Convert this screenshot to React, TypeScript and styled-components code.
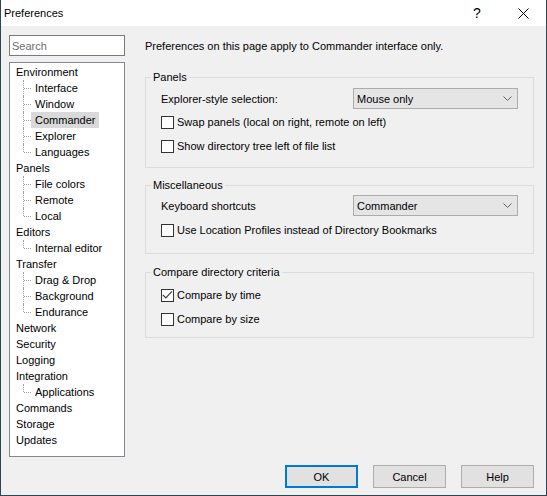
import React from 'react'
import styled, { createGlobalStyle } from 'styled-components'

const GlobalStyle = createGlobalStyle`
  html, body {
    margin: 0;
    padding: 0;
    background: #fff;
  }
  body {
    font-family: 'Liberation Sans', Arial, sans-serif;
    font-size: 11px;
    color: #000;
  }
  * {
    box-sizing: border-box;
  }
`

const Window = styled.div`
  width: 547px;
  height: 496px;
  display: flex;
  flex-direction: column;
  border: 1px solid #2b4553;
  border-top: none;
  background: #f0f0f0;
`

const TitleBar = styled.div`
  height: 26px;
  flex: none;
  display: flex;
  align-items: center;
  background: #fff;
`

const Title = styled.div`
  flex: 1;
  padding-left: 3px;
  line-height: 16px;
`

const CaptionButton = styled.div`
  width: 46px;
  height: 100%;
  display: flex;
  align-items: center;
  justify-content: center;
  font-size: 14px;
`

const Body = styled.div`
  flex: 1;
  display: flex;
  flex-direction: column;
  padding: 9px 12px 7px 8px;
  min-height: 0;
`

const Main = styled.div`
  flex: 1;
  display: flex;
  min-height: 0;
`

const Sidebar = styled.div`
  width: 116px;
  flex: none;
  display: flex;
  flex-direction: column;
  gap: 6px;
`

const Search = styled.input`
  height: 21px;
  border: 1px solid #7a7a7a;
  background: #fff;
  padding: 0 2px;
  font: inherit;
  outline: none;

  &::placeholder {
    color: #6d6d6d;
  }
`

const Tree = styled.div`
  flex: 1;
  border: 1px solid #828790;
  background: #fff;
  padding-top: 1px;
`

const Row = styled.div<{ $child?: boolean }>`
  height: 16px;
  display: flex;
  align-items: stretch;
  padding-left: ${p => (p.$child ? 13 : 2)}px;
`

const Connector = styled.span<{ $last?: boolean }>`
  position: relative;
  width: 8px;
  flex: none;

  &::before {
    content: '';
    position: absolute;
    left: 0;
    top: 0;
    bottom: ${p => (p.$last ? 8 : 0)}px;
    border-left: 1px dotted #a0a0a0;
  }

  &::after {
    content: '';
    position: absolute;
    left: 1px;
    right: 0;
    top: 8px;
    border-top: 1px dotted #a0a0a0;
  }
`

const Label = styled.span<{ $selected?: boolean }>`
  padding: 0 3px 0 4px;
  line-height: 16px;
  white-space: nowrap;
  background: ${p => (p.$selected ? '#d9d9d9' : 'transparent')};
`

const Content = styled.div`
  flex: 1;
  margin-left: 20px;
  padding-top: 3px;
  display: flex;
  flex-direction: column;
`

const Intro = styled.div`
  line-height: 16px;
`

const Group = styled.fieldset<{ $gap: number }>`
  margin: ${p => p.$gap}px 0 0;
  padding: 0;
  border: 1px solid #dcdcdc;
  min-width: 0;
`

const Legend = styled.legend`
  margin-left: 5px;
  padding: 0 2px;
  line-height: 16px;
`

const GroupBody = styled.div<{ $top: number; $bottom: number }>`
  display: flex;
  flex-direction: column;
  padding: ${p => p.$top}px 15px ${p => p.$bottom}px;
`

const FieldRow = styled.div<{ $after: number }>`
  display: flex;
  align-items: center;
  justify-content: space-between;
  margin-bottom: ${p => p.$after}px;
`

const Combo = styled.div`
  width: 165px;
  height: 21px;
  display: flex;
  align-items: center;
  justify-content: space-between;
  padding: 0 5px 0 3px;
  border: 1px solid #acacac;
  background: #e5e5e5;
`

const CheckRow = styled.label`
  height: 24px;
  display: flex;
  align-items: center;
  gap: 3px;
`

const Box = styled.span`
  width: 13px;
  height: 13px;
  flex: none;
  border: 1px solid #333;
  background: #fff;
  display: flex;
`

const Footer = styled.div`
  height: 23px;
  margin-top: 8px;
  flex: none;
  display: flex;
  justify-content: flex-end;
  gap: 15px;
`

const Button = styled.button<{ $default?: boolean }>`
  width: 73px;
  height: 23px;
  padding: 0;
  font: inherit;
  color: #000;
  background: #e1e1e1;
  border: ${p => (p.$default ? '2px solid #0078d7' : '1px solid #adadad')};
`

type Node = { label: string; children?: string[] }

const tree: Node[] = [
  { label: 'Environment', children: ['Interface', 'Window', 'Commander', 'Explorer', 'Languages'] },
  { label: 'Panels', children: ['File colors', 'Remote', 'Local'] },
  { label: 'Editors', children: ['Internal editor'] },
  { label: 'Transfer', children: ['Drag & Drop', 'Background', 'Endurance'] },
  { label: 'Network' },
  { label: 'Security' },
  { label: 'Logging' },
  { label: 'Integration', children: ['Applications'] },
  { label: 'Commands' },
  { label: 'Storage' },
  { label: 'Updates' },
]

const Chevron = () => (
  <svg width="9" height="5" viewBox="0 0 9 5">
    <polyline points="0.5,0.5 4.5,4.5 8.5,0.5" fill="none" stroke="#606060" strokeWidth="1" />
  </svg>
)

const Check: React.FC<{ checked?: boolean; children: React.ReactNode }> = ({ checked, children }) => (
  <CheckRow>
    <Box>
      {checked && (
        <svg width="11" height="11" viewBox="0 0 11 11">
          <polyline points="0.8,4.8 3.8,7.8 10,1.3" fill="none" stroke="#3c3c3c" strokeWidth="1.2" />
        </svg>
      )}
    </Box>
    {children}
  </CheckRow>
)

export default function App() {
  return (
    <>
      <GlobalStyle />
      <Window>
        <TitleBar>
          <Title>Preferences</Title>
          <CaptionButton>?</CaptionButton>
          <CaptionButton>
            <svg width="11" height="11" viewBox="0 0 11 11">
              <path d="M0.5 0.5 L10.5 10.5 M10.5 0.5 L0.5 10.5" stroke="#000" strokeWidth="1" />
            </svg>
          </CaptionButton>
        </TitleBar>
        <Body>
          <Main>
            <Sidebar>
              <Search placeholder="Search" />
              <Tree>
                {tree.map(node => (
                  <React.Fragment key={node.label}>
                    <Row>
                      <Label>{node.label}</Label>
                    </Row>
                    {node.children?.map((child, i) => (
                      <Row $child key={child}>
                        <Connector $last={i === node.children!.length - 1} />
                        <Label $selected={child === 'Commander'}>{child}</Label>
                      </Row>
                    ))}
                  </React.Fragment>
                ))}
              </Tree>
            </Sidebar>
            <Content>
              <Intro>Preferences on this page apply to Commander interface only.</Intro>

              <Group $gap={15}>
                <Legend>Panels</Legend>
                <GroupBody $top={3} $bottom={9}>
                  <FieldRow $after={1}>
                    <span>Explorer-style selection:</span>
                    <Combo>
                      <span>Mouse only</span>
                      <Chevron />
                    </Combo>
                  </FieldRow>
                  <Check>Swap panels (local on right, remote on left)</Check>
                  <Check>Show directory tree left of file list</Check>
                </GroupBody>
              </Group>

              <Group $gap={9}>
                <Legend>Miscellaneous</Legend>
                <GroupBody $top={2} $bottom={11}>
                  <FieldRow $after={2}>
                    <span>Keyboard shortcuts</span>
                    <Combo>
                      <span>Commander</span>
                      <Chevron />
                    </Combo>
                  </FieldRow>
                  <Check>Use Location Profiles instead of Directory Bookmarks</Check>
                </GroupBody>
              </Group>

              <Group $gap={10}>
                <Legend>Compare directory criteria</Legend>
                <GroupBody $top={3} $bottom={6}>
                  <Check checked>Compare by time</Check>
                  <Check>Compare by size</Check>
                </GroupBody>
              </Group>
            </Content>
          </Main>
          <Footer>
            <Button $default>OK</Button>
            <Button>Cancel</Button>
            <Button>Help</Button>
          </Footer>
        </Body>
      </Window>
    </>
  )
}
